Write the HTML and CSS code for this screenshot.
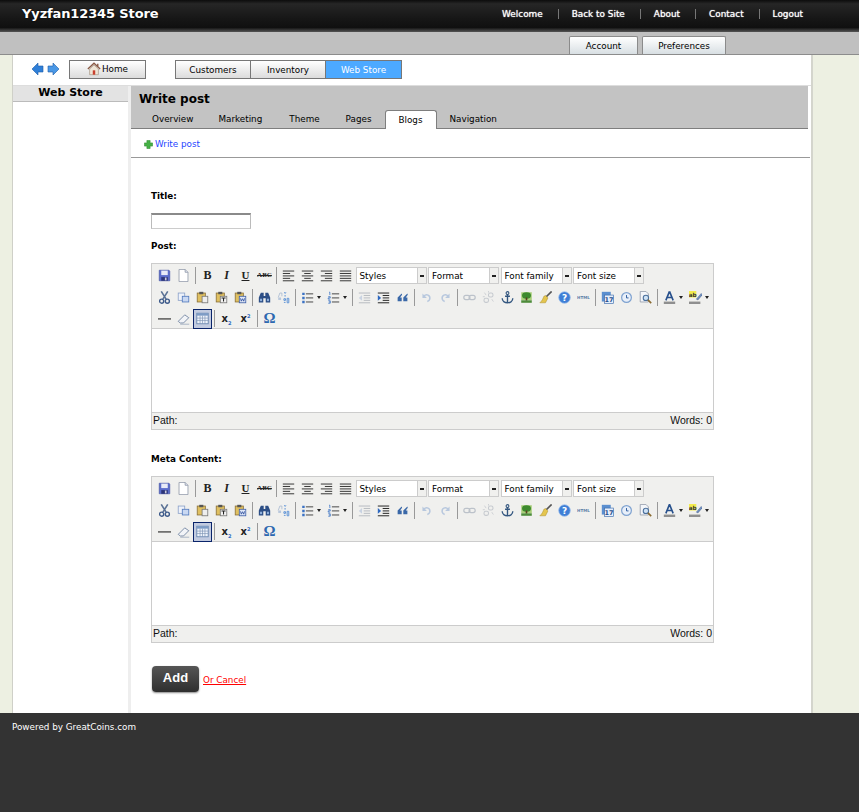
FILE: index.html
```html
<!DOCTYPE html>
<html>
  <head>
    <meta charset="utf-8"/>
    <title>Write post</title>
    <link rel="stylesheet" href="styles.css">
  </head>
  <body>
    <svg class="defs" xmlns="http://www.w3.org/2000/svg">
      <symbol id="i-back" viewBox="0 0 12 12"><path d="M0 6 6 0v3h5v6H6v3z" fill="#2f7fd8" stroke="#1b5ca8" stroke-width=".6"/></symbol>
      <symbol id="i-next" viewBox="0 0 12 12"><path d="M12 6 6 0v3H1v6h5v3z" fill="#4a98e6" stroke="#1b5ca8" stroke-width=".6"/></symbol>
      <symbol id="i-home" viewBox="0 0 16 16"><path d="M1 8 8 1.500 15 8" fill="none" stroke="#8a5a44" stroke-width="1.600"/><path d="M3 8v6.500h10V8L8 3.500z" fill="#efe6d6" stroke="#9a8a78" stroke-width=".7"/><rect x="6.600" y="9.500" width="2.800" height="5" fill="#c8402f"/><rect x="11.500" y="2" width="1.600" height="3" fill="#8a5a44"/></symbol>
      <symbol id="i-plus" viewBox="0 0 10 10"><path d="M3.200 .5h3.600v2.700h2.700v3.600H6.800v2.700H3.200V6.800H.5V3.200h2.700z" fill="#45b045" stroke="#2d8a2d" stroke-width=".6"/></symbol>
      <symbol id="i-save" viewBox="0 0 16 16"><path d="M1.500 1.500h12l1 1v12h-13z" fill="#5a6ccb" stroke="#3c4a9c" stroke-width=".7"/><rect x="4" y="2" width="8" height="5.500" fill="#e8ebf8"/><rect x="4" y="10" width="8" height="4.500" fill="#2c3578"/><rect x="8.500" y="10.500" width="2" height="3.500" fill="#ccd"/></symbol>
      <symbol id="i-new" viewBox="0 0 16 16"><path d="M2.500 .5h7.500l3.500 3.500v11.500h-11z" fill="#fff" stroke="#8f98a8"/><path d="M10 .5v3.500h3.500" fill="#dfe4ee" stroke="#8f98a8"/></symbol>
      <symbol id="i-left" viewBox="0 0 16 16"><path d="M1 2.500h14M1 5.500h9M1 8.500h14M1 11.500h9M1 14.500h14" stroke="#333" stroke-width="1.200"/></symbol>
      <symbol id="i-center" viewBox="0 0 16 16"><path d="M1 2.500h14M4 5.500h8M1 8.500h14M4 11.500h8M1 14.500h14" stroke="#333" stroke-width="1.200"/></symbol>
      <symbol id="i-right" viewBox="0 0 16 16"><path d="M1 2.500h14M6 5.500h9M1 8.500h14M6 11.500h9M1 14.500h14" stroke="#333" stroke-width="1.200"/></symbol>
      <symbol id="i-full" viewBox="0 0 16 16"><path d="M1 2.500h14M1 5.500h14M1 8.500h14M1 11.500h14M1 14.500h14" stroke="#333" stroke-width="1.200"/></symbol>
      <symbol id="i-cut" viewBox="0 0 16 16"><path d="M4 .5 10 10M12 .5 6 10" stroke="#5c7396" stroke-width="2" fill="none"/><circle cx="4.500" cy="12.500" r="2.500" fill="none" stroke="#3d5a8a" stroke-width="1.700"/><circle cx="11.500" cy="12.500" r="2.500" fill="none" stroke="#3d5a8a" stroke-width="1.700"/></symbol>
      <symbol id="i-copy" viewBox="0 0 16 16"><rect x="1.500" y="2.500" width="8" height="9" fill="#eef2fa" stroke="#8aa0c8"/><rect x="6.500" y="6.500" width="8" height="7" fill="#c9d8f2" stroke="#4f78bd"/></symbol>
      <symbol id="i-paste" viewBox="0 0 16 16"><rect x="1.500" y="2.500" width="10" height="11" fill="#e0c060" stroke="#8a7038"/><rect x="4" y="1" width="5" height="3" fill="#555"/><rect x="7.500" y="6.500" width="7" height="8" fill="#eee" stroke="#777"/></symbol>
      <symbol id="i-ptext" viewBox="0 0 16 16"><rect x="1.500" y="2.500" width="10" height="11" fill="#e0c060" stroke="#8a7038"/><rect x="4" y="1" width="5" height="3" fill="#555"/><rect x="6.500" y="6.500" width="8" height="8" fill="#f2f2f2" stroke="#777"/><path d="M8 8.500h5M10.500 8.500v4.500" stroke="#222" stroke-width="1.300"/></symbol>
      <symbol id="i-pword" viewBox="0 0 16 16"><rect x="1.500" y="2.500" width="10" height="11" fill="#e0c060" stroke="#8a7038"/><rect x="4" y="1" width="5" height="3" fill="#555"/><rect x="6.500" y="6.500" width="8" height="8" fill="#dfe7f7" stroke="#3d5fa8"/><path d="M8 9l1 3.500 1.500-3 1.500 3 1-3.500" stroke="#2b4c9a" fill="none"/></symbol>
      <symbol id="i-find" viewBox="0 0 16 16"><path d="M1 8 3.500 2h3.500v4h2V2h3.500L15 8v6H9.500V9h-3v5H1z" fill="#2d4f86"/><rect x="2.500" y="9.500" width="2.500" height="3" fill="#8fb0dc"/><rect x="11" y="9.500" width="2.500" height="3" fill="#8fb0dc"/></symbol>
      <symbol id="i-replace" viewBox="0 0 16 16"><path d="M1.500 8 3.500 2.500h2.500v4" fill="none" stroke="#a9bad2"/><path d="M1.500 8v3h3.500V8z" fill="#b8c7dc"/><path d="M9 1.500l1 1.500 1-1.500M9 6h2M8.500 9.500h2v2h-2zM12.500 9h2v5.500h-2zM8.500 14h2" fill="none" stroke="#5e93d6" stroke-width="1.200"/></symbol>
      <symbol id="i-bul" viewBox="0 0 16 16"><path d="M6 3.500h9M6 8.500h9M6 13.500h9" stroke="#444" stroke-width="1.200"/><path d="M1.500 2h3v3h-3zM1.500 7h3v3h-3zM1.500 12h3v3h-3z" fill="#3b72c4"/></symbol>
      <symbol id="i-num" viewBox="0 0 16 16"><path d="M6 3.500h9M6 8.500h9M6 13.500h9" stroke="#444" stroke-width="1.200"/><path d="M2.500 1.500h1v3.500M1.500 7h2.500v1.500h-2.500V10H4M1.500 12H4v3H1.500M2.500 13.500H4" stroke="#3b72c4" fill="none"/></symbol>
      <symbol id="i-out" viewBox="0 0 16 16"><path d="M1 2.500h14M7 5.500h8M7 8.500h8M7 11.500h8M1 14.500h14" stroke="#b6bac0" stroke-width="1.200"/><path d="M5 5v7L1 8.500z" fill="#c9d3e2"/></symbol>
      <symbol id="i-ind" viewBox="0 0 16 16"><path d="M1 2.500h14M7 5.500h8M7 8.500h8M7 11.500h8M1 14.500h14" stroke="#222" stroke-width="1.200"/><path d="M1 5v7l4-3.500z" fill="#2d68c0"/></symbol>
      <symbol id="i-quote" viewBox="0 0 16 16"><path d="M7 3 2 8v4.500h5V8H5l2.500-3.500zM14 3 9 8v4.500h5V8h-2l2.500-3.500z" fill="#3a68a8"/></symbol>
      <symbol id="i-undo" viewBox="0 0 16 16"><path d="M4.500 6.500C8 3 13 5 12 10c-.3 1.500-1.500 2.500-3 3" fill="none" stroke="#b8c8de" stroke-width="1.900"/><path d="M3 3v5.500h5.500z" fill="#b8c8de"/></symbol>
      <symbol id="i-redo" viewBox="0 0 16 16"><path d="M11.500 6.500C8 3 3 5 4 10c.3 1.500 1.500 2.500 3 3" fill="none" stroke="#b8c8de" stroke-width="1.900"/><path d="M13 3v5.500H7.500z" fill="#b8c8de"/></symbol>
      <symbol id="i-link" viewBox="0 0 16 16"><rect x="1" y="5.500" width="7.500" height="5" rx="2.500" fill="none" stroke="#bcc2ca" stroke-width="1.500"/><rect x="7.500" y="5.500" width="7.500" height="5" rx="2.500" fill="none" stroke="#bcc2ca" stroke-width="1.500"/></symbol>
      <symbol id="i-unlink" viewBox="0 0 16 16"><rect x="2.500" y="9" width="5.500" height="5" rx="2" fill="none" stroke="#c6cacf" stroke-width="1.300"/><rect x="8" y="2.500" width="5.500" height="5" rx="2" fill="none" stroke="#c6cacf" stroke-width="1.300"/><path d="M3 2l2 3M8 0v2M12 10l2 3M1 7h2.500" stroke="#c6cacf"/></symbol>
      <symbol id="i-anchor" viewBox="0 0 16 16"><circle cx="8" cy="2.500" r="1.700" fill="none" stroke="#33567f" stroke-width="1.300"/><path d="M8 4.500V15M5 6.500h6M1.500 9c0 3.500 3 5.500 6.500 5.500s6.500-2 6.500-5.500" fill="none" stroke="#33567f" stroke-width="1.700"/></symbol>
      <symbol id="i-image" viewBox="0 0 16 16"><rect x="1.500" y="1.500" width="13" height="10" fill="#a9cf7a"/><ellipse cx="8" cy="5.500" rx="5.500" ry="4" fill="#3d8a2e"/><rect x="7" y="8" width="2" height="4" fill="#5a4020"/><rect x="1.500" y="11.500" width="13" height="3" fill="#4d8c3a"/></symbol>
      <symbol id="i-clean" viewBox="0 0 16 16"><path d="M15.500 .5 8 8" stroke="#555" stroke-width="2"/><path d="M8 5.500l3 3-3 6H1C4 12 5 9 6 6.500z" fill="#e4c54e" stroke="#a88d2a" stroke-width=".6"/></symbol>
      <symbol id="i-help" viewBox="0 0 16 16"><circle cx="8" cy="8" r="7.200" fill="#3f7fd6" stroke="#a8c5ec"/><text x="8" y="12" text-anchor="middle" class="svg-q">?</text></symbol>
      <symbol id="i-html" viewBox="0 0 16 16"><text x="8" y="10" text-anchor="middle" class="svg-html">HTML</text></symbol>
      <symbol id="i-date" viewBox="0 0 16 16"><rect x="1" y="1" width="11" height="12" fill="#5b8fd0"/><rect x="4.500" y="5" width="11" height="10.500" fill="#e6eefb" stroke="#3c6cab" stroke-width=".8"/><text x="10" y="14" text-anchor="middle" class="svg-date">17</text></symbol>
      <symbol id="i-time" viewBox="0 0 16 16"><circle cx="8" cy="8" r="6" fill="#e8eff9" stroke="#7fa2d0" stroke-width="1.500"/><path d="M8 5v3.500h2.500" fill="none" stroke="#2f5f9f" stroke-width="1.200"/></symbol>
      <symbol id="i-prev" viewBox="0 0 16 16"><path d="M1.500 .5h7l3 3v10h-10z" fill="#f4f6fa" stroke="#8f98a8"/><circle cx="8.500" cy="8.500" r="3.300" fill="#cfe2f5" stroke="#4a6f9c" stroke-width="1.300"/><path d="M11 11l4 4" stroke="#8a6a30" stroke-width="2"/></symbol>
      <symbol id="i-fore" viewBox="0 0 16 16"><path d="M8 .5 3.500 11.500M8 .5l4.500 11M5.500 8h5" fill="none" stroke="#27508c" stroke-width="2"/><rect x="1" y="13" width="14" height="3" fill="#8f8f8f"/></symbol>
      <symbol id="i-hilite" viewBox="0 0 16 16"><rect x="0" y="0" width="9" height="8" fill="#f2ec4e"/><text x="4.500" y="7" text-anchor="middle" class="svg-ab">ab</text><path d="M9 10 15 3l1.500 1.500L11 11z" fill="#6f8fc0" stroke="#39557f" stroke-width=".5"/><rect x="0" y="13" width="14" height="3" fill="#8f8f8f"/></symbol>
      <symbol id="i-hr" viewBox="0 0 16 16"><path d="M0 8.500h16" stroke="#555" stroke-width="1.800"/></symbol>
      <symbol id="i-erase" viewBox="0 0 16 16"><path d="M1.500 11.500 9.500 3.500l5 3.500-6.500 6.500H4z" fill="#f2f4f8" stroke="#7c8ea8" stroke-width="1.200"/><path d="M4 15h11" stroke="#9aa8bb"/></symbol>
      <symbol id="i-table" viewBox="0 0 16 16"><rect x="1" y="1.500" width="14" height="13" fill="#eef3fb" stroke="#5e7ea8"/><rect x="1" y="1.500" width="14" height="3" fill="#7d9cc6"/><path d="M1 7.500h14M1 10.500h14M5 4.500v10M8 4.500v10M11 4.500v10" stroke="#7d93b3" stroke-width=".8"/></symbol>
    </svg>

    <div class="topbar">
      <div class="brand">Yyzfan12345 Store</div>
      <ul class="toplinks">
        <li>Welcome</li>
        <li>Back to Site</li>
        <li>About</li>
        <li>Contact</li>
        <li>Logout</li>
      </ul>
    </div>
    <div class="subbar">
      <a class="subtab subtab-account">Account</a>
      <a class="subtab subtab-prefs">Preferences</a>
    </div>

    <div class="wrap">
      <div class="navrow">
        <svg class="arrow"><use href="#i-back"/></svg>
        <svg class="arrow"><use href="#i-next"/></svg>
        <a class="homebtn"><svg class="homeicon"><use href="#i-home"/></svg>Home</a>
        <div class="modules">
          <a class="module">Customers</a>
          <a class="module">Inventory</a>
          <a class="module active">Web Store</a>
        </div>
      </div>

      <div class="columns">
        <div class="sidebar">
          <div class="side-head">Web Store</div>
        </div>
        <div class="main">
          <div class="main-head">
            <h1>Write post</h1>
            <div class="tabs">
              <a class="tab tab-overview">Overview</a>
              <a class="tab tab-marketing">Marketing</a>
              <a class="tab tab-theme">Theme</a>
              <a class="tab tab-pages">Pages</a>
              <a class="tab current">Blogs</a>
              <a class="tab tab-nav">Navigation</a>
            </div>
          </div>
          <div class="actions">
            <svg class="plus"><use href="#i-plus"/></svg><a class="action-link">Write post</a>
          </div>

          <form class="form">
            <label class="label label-title">Title:</label>
            <input class="textbox" type="text">
            <label class="label label-post">Post:</label>

            <div class="editor">
              <div class="toolbar">
                <div class="row">
                  <span class="btn"><svg><use href="#i-save"/></svg></span>
                  <span class="btn"><svg><use href="#i-new"/></svg></span>
                  <span class="sep"></span>
                  <span class="btn glyph bold">B</span>
                  <span class="btn glyph ital">I</span>
                  <span class="btn glyph under">U</span>
                  <span class="btn glyph strike">ABC</span>
                  <span class="sep"></span>
                  <span class="btn"><svg><use href="#i-left"/></svg></span>
                  <span class="btn"><svg><use href="#i-center"/></svg></span>
                  <span class="btn"><svg><use href="#i-right"/></svg></span>
                  <span class="btn"><svg><use href="#i-full"/></svg></span>
                  <span class="select select-first"><span class="select-text">Styles</span><span class="select-arrow"></span></span>
                  <span class="select"><span class="select-text">Format</span><span class="select-arrow"></span></span>
                  <span class="select"><span class="select-text">Font family</span><span class="select-arrow"></span></span>
                  <span class="select"><span class="select-text">Font size</span><span class="select-arrow"></span></span>
                </div>
                <div class="row">
                  <span class="btn"><svg><use href="#i-cut"/></svg></span>
                  <span class="btn"><svg><use href="#i-copy"/></svg></span>
                  <span class="btn"><svg><use href="#i-paste"/></svg></span>
                  <span class="btn"><svg><use href="#i-ptext"/></svg></span>
                  <span class="btn"><svg><use href="#i-pword"/></svg></span>
                  <span class="sep"></span>
                  <span class="btn"><svg><use href="#i-find"/></svg></span>
                  <span class="btn"><svg><use href="#i-replace"/></svg></span>
                  <span class="sep"></span>
                  <span class="btn split"><svg><use href="#i-bul"/></svg><i class="caret"></i></span>
                  <span class="btn split"><svg><use href="#i-num"/></svg><i class="caret"></i></span>
                  <span class="sep"></span>
                  <span class="btn"><svg><use href="#i-out"/></svg></span>
                  <span class="btn"><svg><use href="#i-ind"/></svg></span>
                  <span class="btn"><svg><use href="#i-quote"/></svg></span>
                  <span class="sep"></span>
                  <span class="btn"><svg><use href="#i-undo"/></svg></span>
                  <span class="btn"><svg><use href="#i-redo"/></svg></span>
                  <span class="sep"></span>
                  <span class="btn"><svg><use href="#i-link"/></svg></span>
                  <span class="btn"><svg><use href="#i-unlink"/></svg></span>
                  <span class="btn"><svg><use href="#i-anchor"/></svg></span>
                  <span class="btn"><svg><use href="#i-image"/></svg></span>
                  <span class="btn"><svg><use href="#i-clean"/></svg></span>
                  <span class="btn"><svg><use href="#i-help"/></svg></span>
                  <span class="btn"><svg><use href="#i-html"/></svg></span>
                  <span class="sep"></span>
                  <span class="btn"><svg><use href="#i-date"/></svg></span>
                  <span class="btn"><svg><use href="#i-time"/></svg></span>
                  <span class="btn"><svg><use href="#i-prev"/></svg></span>
                  <span class="sep"></span>
                  <span class="btn split"><svg><use href="#i-fore"/></svg><i class="caret"></i></span>
                  <span class="btn split"><svg><use href="#i-hilite"/></svg><i class="caret"></i></span>
                </div>
                <div class="row">
                  <span class="btn"><svg><use href="#i-hr"/></svg></span>
                  <span class="btn"><svg><use href="#i-erase"/></svg></span>
                  <span class="btn on"><svg><use href="#i-table"/></svg></span>
                  <span class="sep"></span>
                  <span class="btn glyph script">x<sub>2</sub></span>
                  <span class="btn glyph script">x<sup>2</sup></span>
                  <span class="sep"></span>
                  <span class="btn glyph omega">Ω</span>
                </div>
              </div>
              <div class="editarea"></div>
              <div class="status"><span>Path:</span><span>Words: 0</span></div>
            </div>

            <label class="label label-meta">Meta Content:</label>

            <div class="editor">
              <div class="toolbar">
                <div class="row">
                  <span class="btn"><svg><use href="#i-save"/></svg></span>
                  <span class="btn"><svg><use href="#i-new"/></svg></span>
                  <span class="sep"></span>
                  <span class="btn glyph bold">B</span>
                  <span class="btn glyph ital">I</span>
                  <span class="btn glyph under">U</span>
                  <span class="btn glyph strike">ABC</span>
                  <span class="sep"></span>
                  <span class="btn"><svg><use href="#i-left"/></svg></span>
                  <span class="btn"><svg><use href="#i-center"/></svg></span>
                  <span class="btn"><svg><use href="#i-right"/></svg></span>
                  <span class="btn"><svg><use href="#i-full"/></svg></span>
                  <span class="select select-first"><span class="select-text">Styles</span><span class="select-arrow"></span></span>
                  <span class="select"><span class="select-text">Format</span><span class="select-arrow"></span></span>
                  <span class="select"><span class="select-text">Font family</span><span class="select-arrow"></span></span>
                  <span class="select"><span class="select-text">Font size</span><span class="select-arrow"></span></span>
                </div>
                <div class="row">
                  <span class="btn"><svg><use href="#i-cut"/></svg></span>
                  <span class="btn"><svg><use href="#i-copy"/></svg></span>
                  <span class="btn"><svg><use href="#i-paste"/></svg></span>
                  <span class="btn"><svg><use href="#i-ptext"/></svg></span>
                  <span class="btn"><svg><use href="#i-pword"/></svg></span>
                  <span class="sep"></span>
                  <span class="btn"><svg><use href="#i-find"/></svg></span>
                  <span class="btn"><svg><use href="#i-replace"/></svg></span>
                  <span class="sep"></span>
                  <span class="btn split"><svg><use href="#i-bul"/></svg><i class="caret"></i></span>
                  <span class="btn split"><svg><use href="#i-num"/></svg><i class="caret"></i></span>
                  <span class="sep"></span>
                  <span class="btn"><svg><use href="#i-out"/></svg></span>
                  <span class="btn"><svg><use href="#i-ind"/></svg></span>
                  <span class="btn"><svg><use href="#i-quote"/></svg></span>
                  <span class="sep"></span>
                  <span class="btn"><svg><use href="#i-undo"/></svg></span>
                  <span class="btn"><svg><use href="#i-redo"/></svg></span>
                  <span class="sep"></span>
                  <span class="btn"><svg><use href="#i-link"/></svg></span>
                  <span class="btn"><svg><use href="#i-unlink"/></svg></span>
                  <span class="btn"><svg><use href="#i-anchor"/></svg></span>
                  <span class="btn"><svg><use href="#i-image"/></svg></span>
                  <span class="btn"><svg><use href="#i-clean"/></svg></span>
                  <span class="btn"><svg><use href="#i-help"/></svg></span>
                  <span class="btn"><svg><use href="#i-html"/></svg></span>
                  <span class="sep"></span>
                  <span class="btn"><svg><use href="#i-date"/></svg></span>
                  <span class="btn"><svg><use href="#i-time"/></svg></span>
                  <span class="btn"><svg><use href="#i-prev"/></svg></span>
                  <span class="sep"></span>
                  <span class="btn split"><svg><use href="#i-fore"/></svg><i class="caret"></i></span>
                  <span class="btn split"><svg><use href="#i-hilite"/></svg><i class="caret"></i></span>
                </div>
                <div class="row">
                  <span class="btn"><svg><use href="#i-hr"/></svg></span>
                  <span class="btn"><svg><use href="#i-erase"/></svg></span>
                  <span class="btn on"><svg><use href="#i-table"/></svg></span>
                  <span class="sep"></span>
                  <span class="btn glyph script">x<sub>2</sub></span>
                  <span class="btn glyph script">x<sup>2</sup></span>
                  <span class="sep"></span>
                  <span class="btn glyph omega">Ω</span>
                </div>
              </div>
              <div class="editarea"></div>
              <div class="status"><span>Path:</span><span>Words: 0</span></div>
            </div>

            <div class="buttons">
              <a class="addbtn">Add</a>
              <a class="cancel">Or Cancel</a>
            </div>
          </form>
        </div>
      </div>
    </div>

    <div class="footer">Powered by GreatCoins.com</div>
  </body>
</html>
```

FILE: styles.css
```css
html, body {
  padding: 0;
  margin: 0;
}
body {
  background-color: #edf0e2;
  font-family: "DejaVu Sans", Verdana, sans-serif;
  font-size: 8.8px;
  color: #000;
  height: 812px;
  overflow: hidden;
}
.defs {
  display: none;
}
a {
  display: block;
}
.svg-q {
  font: bold 11px "DejaVu Sans", sans-serif;
  fill: #fff;
}
.svg-html {
  font: bold 5px "DejaVu Sans", sans-serif;
  fill: #5b7ea8;
}
.svg-date {
  font: bold 8px "DejaVu Sans", sans-serif;
  fill: #26508c;
}
.svg-ab {
  font: bold 7px "DejaVu Sans", sans-serif;
  fill: #333;
}

/* top bars */
.topbar {
  display: flex;
  justify-content: space-between;
  height: 32px;
  background: linear-gradient(#0c0c0c 0, #262626 12%, #161616 60%, #101010 86%, #555 100%);
  color: #fff;
}
.brand {
  margin-left: 22px;
  font-size: 13px;
  letter-spacing: -.13px;
  font-weight: bold;
  line-height: 28px;
  text-shadow: 0 0 2px #000;
}
.toplinks {
  display: flex;
  list-style: none;
  margin: 9px 56px 0 0;
  padding: 0;
  height: 10px;
  line-height: 10px;
  font-size: 8.9px;
  text-shadow: 0 0 1px #fff;
}
.toplinks li {
  padding: 0 15px 0 13px;
  border-left: 1px solid #777;
}
.toplinks li:first-child {
  border-left: 0;
}
.toplinks li:last-child {
  padding-right: 0;
}
.subbar {
  display: flex;
  height: 22px;
  padding-left: 569px;
  background-color: #c0c0c0;
  border-bottom: 1px solid #8c8c8c;
}
.subtab {
  margin-top: 4px;
  height: 17px;
  line-height: 18px;
  text-align: center;
  background: linear-gradient(#fff, #d8dfe3);
  border: 1px solid #8b8b8b;
  border-bottom: 0;
  border-radius: 2px 2px 0 0;
}
.subtab-account {
  width: 67px;
}
.subtab-prefs {
  width: 82px;
  margin-left: 4px;
}

/* page column */
.wrap {
  width: 798px;
  height: 658px;
  margin-left: 12px;
  background-color: #fff;
  border-left: 1px solid #cfd0c8;
  border-right: 2px solid #d4d5cd;
}
.navrow {
  display: flex;
  align-items: flex-start;
  height: 30px;
  border-bottom: 1px solid #ddd;
}
.arrow {
  width: 12px;
  height: 12px;
  margin-top: 8px;
}
.arrow:first-child {
  margin-left: 19px;
  margin-right: 3px;
}
.homebtn {
  display: flex;
  align-items: center;
  width: 77px;
  height: 19px;
  margin: 5px 0 0 10px;
  padding: 0 0 2px 17px;
  box-sizing: border-box;
  border: 1px solid #777;
  background: linear-gradient(#fff, #dcdcdc);
}
.homeicon {
  width: 14px;
  height: 14px;
  margin-right: 1px;
}
.modules {
  display: flex;
  margin: 5px 0 0 29px;
  height: 19px;
  border: 1px solid #777;
  box-sizing: border-box;
}
.module {
  width: 75px;
  line-height: 18px;
  text-align: center;
  background: linear-gradient(#fff, #dcdcdc);
  border-right: 1px solid #777;
  box-sizing: border-box;
}
.module.active {
  background: #4ca9ff;
  color: #fff;
  border-right: 0;
}

.columns {
  display: flex;
  height: 627px;
}
.sidebar {
  width: 115px;
  flex: none;
}
.side-head {
  height: 15px;
  line-height: 13px;
  text-align: center;
  font-size: 11px;
  font-weight: bold;
  background-color: #e3e3e3;
  border-bottom: 1px solid #bbb;
}
.main {
  flex: 1;
  margin-left: 3px;
  box-shadow: -3px 0 0 #eee;
  min-width: 0;
}
.main-head {
  height: 42px;
  margin-right: 3px;
  background-color: #c3c3c3;
  border-bottom: 1px solid #7e7e7e;
  display: flex;
  flex-direction: column;
  justify-content: space-between;
}
.main-head h1 {
  margin: 6px 0 0 8px;
  font-size: 12px;
  font-weight: bold;
  line-height: 14px;
}
.tabs {
  display: flex;
  height: 18px;
}
.tab {
  line-height: 18px;
}
.tab-overview {
  margin-left: 21px;
}
.tab-marketing {
  margin-left: 25px;
}
.tab-theme {
  margin-left: 27px;
}
.tab-pages {
  margin-left: 26px;
}
.tab.current {
  width: 52px;
  height: 19px;
  margin-left: 13px;
  box-sizing: border-box;
  text-align: center;
  background-color: #fff;
  border: 1px solid #7e7e7e;
  border-bottom: 0;
  border-radius: 3px 3px 0 0;
}
.tab-nav {
  margin-left: 13px;
}
.actions {
  display: flex;
  align-items: center;
  height: 29px;
  padding: 2px 0 0 13px;
  box-sizing: border-box;
  margin-right: 1px;
  border-bottom: 1px solid #999;
  color: #1f46ff;
}
.plus {
  width: 9px;
  height: 9px;
  margin-right: 2px;
}

/* form */
.form {
  padding: 33px 0 0 20px;
  display: flex;
  flex-direction: column;
  align-items: flex-start;
}
.label {
  display: block;
  font-weight: bold;
  line-height: 11px;
}
.label-post {
  margin-top: 12px;
}
.label-meta {
  margin-top: 24px;
}
.textbox {
  display: block;
  width: 100px;
  height: 16px;
  box-sizing: border-box;
  margin: 11px 0 0 0;
  padding: 0;
  background: #fff;
  border: 1px solid #ccc;
  border-top: 2px solid #8a8a8a;
  border-left-color: #bbb;
  border-right-color: #bbb;
}
.editor {
  width: 563px;
  margin-top: 11px;
  box-sizing: border-box;
  border: 1px solid #ccc;
  background-color: #f0f0ee;
}
.toolbar {
  height: 65px;
  padding: 0 0 0 3px;
  box-sizing: border-box;
  border-bottom: 1px solid #ccc;
}
.row {
  display: flex;
  align-items: center;
  height: 21px;
}
.row:first-child {
  height: 22px;
  margin-bottom: 1px;
}
.btn {
  display: flex;
  align-items: center;
  justify-content: center;
  width: 19px;
  height: 20px;
  flex: none;
  box-sizing: border-box;
}
.btn svg {
  width: 13px;
  height: 13px;
  flex: none;
}
.btn.split {
  width: 26px;
  justify-content: flex-start;
  padding-left: 3px;
}
.caret {
  display: block;
  margin-left: 3px;
  border: 2px solid transparent;
  border-top: 3px solid #222;
  border-bottom: 0;
}
.btn.on {
  border: 1px solid #0a246a;
  background-color: #c2cbe0;
}
.sep {
  width: 5px;
  height: 17px;
  flex: none;
  background: linear-gradient(#999, #999) center / 1px 100% no-repeat;
}
.glyph {
  font-family: "Liberation Serif", serif;
  color: #222;
}
.bold {
  font-size: 12px;
  font-weight: bold;
}
.ital {
  font-size: 12px;
  font-weight: bold;
  font-style: italic;
}
.under {
  font-size: 11px;
  font-weight: bold;
  text-decoration: underline;
}
.strike {
  font-size: 7px;
  font-weight: bold;
  text-decoration: line-through;
}
.script {
  font-family: "DejaVu Sans", sans-serif;
  font-size: 10px;
  font-weight: bold;
}
.script sub {
  align-self: flex-end;
  margin-bottom: 3px;
  font-size: 5px;
  line-height: 6px;
  color: #2d68c0;
}
.script sup {
  align-self: flex-start;
  margin-top: 4px;
  font-size: 5px;
  line-height: 6px;
  color: #2d68c0;
}
.omega {
  font-size: 15px;
  font-weight: bold;
  color: #2d68b0;
}
.select {
  display: flex;
  height: 17px;
  width: 71px;
  flex: none;
  margin-left: 1.5px;
}
.select-first {
  margin-left: .5px;
}
.select-text {
  flex: 1;
  padding-left: 3px;
  line-height: 16px;
  background-color: #fff;
  border: 1px solid #ccc;
}
.select-arrow {
  width: 9px;
  flex: none;
  box-sizing: border-box;
  border: 1px solid #ccc;
  border-left: 0;
  background: linear-gradient(#222, #222) center 7px / 4px 2px no-repeat;
}
.editarea {
  height: 84px;
  background-color: #fff;
  border-bottom: 1px solid #ccc;
  box-sizing: border-box;
}
.status {
  display: flex;
  justify-content: space-between;
  height: 16px;
  padding: 0 1px;
  line-height: 15px;
  font-family: "Liberation Sans", Arial, sans-serif;
  font-size: 10.5px;
  color: #111;
}
.buttons {
  display: flex;
  align-items: center;
  margin-top: 23px;
}
.addbtn {
  width: 47px;
  height: 26px;
  line-height: 24px;
  text-align: center;
  margin-left: 1px;
  font-family: "Liberation Sans", Arial, sans-serif;
  font-size: 13px;
  font-weight: bold;
  color: #fff;
  border-radius: 4px;
  background: linear-gradient(#555, #2e2e2e);
  box-shadow: 0 1px 2px #888;
}
.cancel {
  margin: 1px 0 0 4px;
  color: #f00;
  text-decoration: underline;
}

.footer {
  height: 99px;
  box-sizing: border-box;
  padding: 9px 0 0 12px;
  background-color: #333;
  color: #fff;
  line-height: 11px;
}
```
